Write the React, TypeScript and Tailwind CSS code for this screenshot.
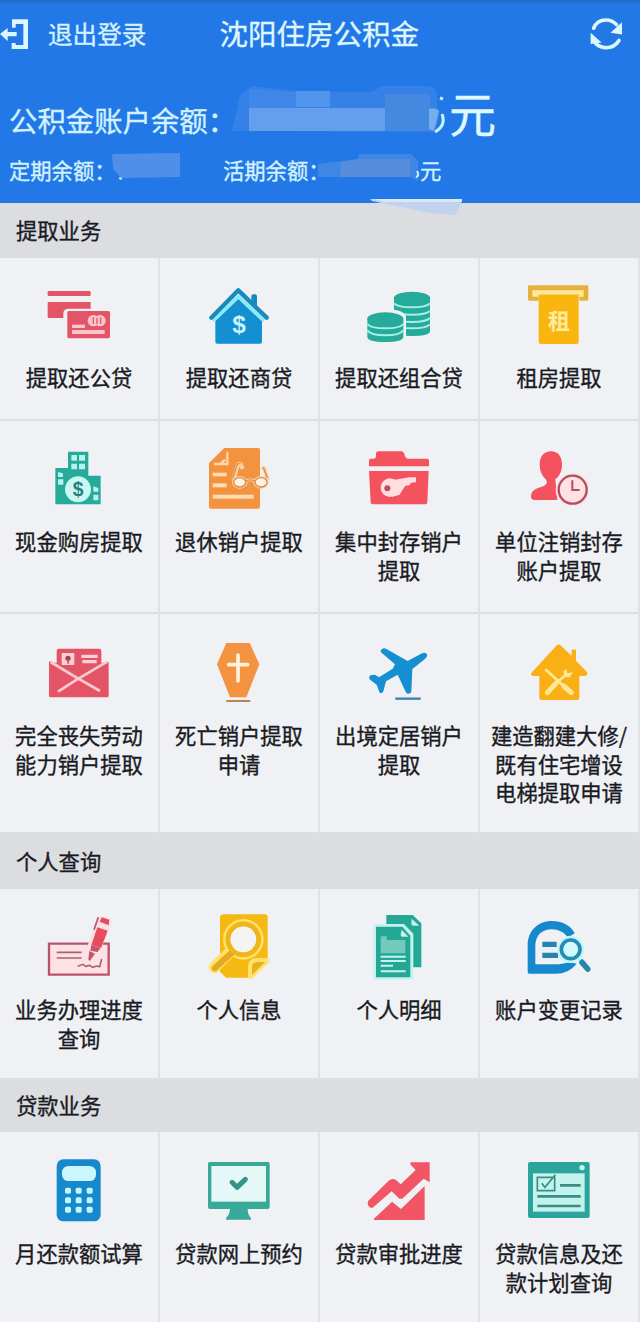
import type { ReactNode } from 'react'

interface Item {
  lines: string[]
  icon: ReactNode
}

interface Row {
  id: string
  className: string
  iconTop: number
  items: Item[]
}

interface Section {
  title: string
  className: string
  rows: Row[]
}

const RED = '#e35566'
const CORAL = '#f4525f'
const BLUE = '#148fd2'
const GREEN = '#26aa9a'
const AMBER = '#fbb50f'
const ORANGE = '#f3923f'

const CardsIcon = (
  <g fill={RED}>
    <rect x="143" y="93" width="129" height="15" rx="4" />
    <path d="M146 126h126v20h-66q-16 0-16 14v14h-43q-4 0-4-4v-40q0-4 3-4z" />
    <rect x="202" y="153" width="128" height="82" rx="5" />
    <g fill="#fcc6cd">
      <rect x="216" y="194" width="39" height="10" />
      <rect x="216" y="210" width="98" height="12" />
      <circle cx="280" cy="182" r="17" />
      <circle cx="300" cy="182" r="17" />
    </g>
    <path d="M280 172v20M291 174v18M302 172v20" stroke={RED} strokeWidth="4" />
  </g>
)

const HouseDollarIcon = (
  <g>
    <path d="M638 181l77-76 77 76-6 4v60q0 6-6 6H652q-6 0-6-6v-62z" fill={BLUE} />
    <path d="M640 182l75-72 77 73" fill="none" stroke="#8beaf8" strokeWidth="11" strokeLinejoin="round" />
    <path d="M754 107l4-4h10l3 4v38l-17-18z" fill="#168abe" />
    <path d="M634 173l81-82 85 82" fill="none" stroke="#188abf" strokeWidth="13" strokeLinecap="round" strokeLinejoin="round" />
    <text x="717" y="219" textAnchor="middle" fontSize="73" fontWeight="700" fontFamily="Liberation Sans, sans-serif" fill="#c9f6fa">$</text>
  </g>
)

const CoinsIcon = (
  <g>
    <path d="M222 112v102q0 14 54 14t54-14V112z" fill={GREEN} />
    <ellipse cx="276" cy="113" rx="54" ry="18" fill={GREEN} />
    <path d="M222 130q12 12 54 12t54-12M222 153q12 11 54 11t54-11M222 174q12 12 54 12t54-12M222 193q12 12 54 12t54-12" fill="none" stroke="#a7efe5" strokeWidth="6" />
    <path d="M136 170q0-22 60-22t62 24v82H136z" fill="#eff1f4" />
    <path d="M142 174v56q0 16 54 16t54-16v-56z" fill={GREEN} />
    <ellipse cx="196" cy="176" rx="54" ry="19" fill={GREEN} />
    <path d="M142 192q10 13 54 13t54-13M142 211q10 15 54 15t54-15" fill="none" stroke="#a7efe5" strokeWidth="6" />
  </g>
)

const RentIcon = (
  <g>
    <path d="M628 76h173q4 0 4 4v38q0 4-4 4h-23V106H656v16h-28q-4 0-4-4V80q0-4 4-4z" fill="#e3b23c" />
    <path d="M637 91h154v19h-13v-6H656v6h-19z" fill="#ffe796" />
    <path d="M656 104h120v142q0 6-6 6H662q-6 0-6-6z" fill={AMBER} />
    <text x="717" y="208" textAnchor="middle" fontSize="66" fontWeight="700" fontFamily="Noto Sans CJK SC, sans-serif" fill="#ffeba0">租</text>
  </g>
)

const BuildingIcon = (
  <g>
    <path d="M204 95h61v72h37v86H166V144h38z" fill={GREEN} />
    <g fill="#b9f2ec">
      <path d="M214 105h17v17h-17zM237 105h18v17h-18zM214 131h17v17h-17zM237 131h18v17h-18z" />
      <path d="M174 156l15 4v11h-15zM174 178h16v16h-16zM280 199l15 5v11h-15zM280 224h15v17h-15z" />
    </g>
    <circle cx="234" cy="208" r="43" fill={GREEN} />
    <circle cx="234" cy="208" r="39" fill="#c9f7f1" />
    <text x="234" y="228" textAnchor="middle" fontSize="58" fontWeight="700" fontFamily="Liberation Sans, sans-serif" fill="#237f7a">$</text>
  </g>
)

const RetireIcon = (
  <g>
    <path d="M673 84h102q5 0 5 6v170q0 6-6 6H633q-6 0-6-6V129z" fill={ORANGE} />
    <path d="M682 97v35h-40M675 119l-16 15" fill="none" stroke="#ffd6a5" strokeWidth="7" />
    <g fill="#ffdcb2">
      <rect x="638" y="158" width="42" height="11" />
      <rect x="638" y="190" width="42" height="12" />
      <rect x="638" y="224" width="123" height="12" />
    </g>
    <path d="M700 180l12-40q4-12 11-7l5 14M804 180l-11-34-9-4" fill="none" stroke="#fbd1a3" strokeWidth="12" />
    <ellipse cx="719" cy="187" rx="23" ry="19" fill="#fbd1a3" />
    <ellipse cx="783" cy="187" rx="23" ry="19" fill="#fbd1a3" />
    <path d="M738 184q12-9 26 0" fill="none" stroke="#fbd1a3" strokeWidth="9" />
    <ellipse cx="719" cy="187" rx="18" ry="14" fill="#fff2df" stroke="#d98c4e" strokeWidth="4" />
    <ellipse cx="783" cy="187" rx="18" ry="14" fill="#fff2df" stroke="#d98c4e" strokeWidth="4" />
    <path d="M737 184q13-9 28 0M698 176l12-38q4-10 12-7M802 174l-12-32" fill="none" stroke="#d98c4e" strokeWidth="4" />
  </g>
)

const FolderKeyIcon = (
  <g>
    <path d="M175 94h69q6 0 8 6l3 8q2 8 9 8h58q5 0 5 5v18H147v-18q0-5 5-5h10q6 0 6-7v-9q0-6 7-6z" fill={CORAL} />
    <path d="M147 153h179l-4 94q0 6-6 6H158q-6 0-6-6z" fill={CORAL} />
    <circle cx="210" cy="203" r="28" fill="#ffdde0" />
    <path d="M207 176l18 3 43-7h20v15l-15 1-5 8-12 1-18 28-22 5z" fill="#ffdde0" />
    <circle cx="202" cy="205" r="9" fill="#bd4e5c" />
  </g>
)

const UserClockIcon = (
  <g>
    <path d="M693 94c21 0 33 15 33 40 0 20-8 34-20 44l6 62h-68q-12 0-11-13c1-15 15-22 31-26 14-4 21-12 13-23-12-13-18-26-18-44 0-25 13-40 34-40z" fill={CORAL} />
    <circle cx="758" cy="209" r="51" fill="#f8e6e9" />
    <circle cx="758" cy="209" r="42" fill="#ffe0e3" stroke="#b34e62" strokeWidth="7" />
    <path d="M757 181v29h22" fill="none" stroke="#b34e62" strokeWidth="6" />
  </g>
)

const EnvelopeIcon = (
  <g>
    <path d="M147 154l23 5v-36q0-7 7-7h120q7 0 7 7v36l22-4v102q0 5-5 5H152q-5 0-5-5z" fill={RED} />
    <path d="M152 156l83 50 88-52M300 243l-65-37-61 39" fill="none" stroke="#fcc9cf" strokeWidth="8" />
    <rect x="185" y="129" width="38" height="36" rx="2" fill="#fdd0d4" />
    <circle cx="204" cy="145" r="8" fill="#9d4457" />
    <path d="M202 148h5v13h-5z" fill="#c95364" />
    <path d="M244 139h49M247 155h43" stroke="#fdd0d4" strokeWidth="10" />
  </g>
)

const CoffinIcon = (
  <g>
    <path d="M679 99h70l29 64-39 99h-49l-39-99z" fill={ORANGE} />
    <path d="M714 135v78M686 164h57" stroke="#fff2df" strokeWidth="11" strokeLinecap="round" />
    <path d="M679 273h72" stroke="#b78456" strokeWidth="6" />
  </g>
)

const PlaneIcon = (
  <g>
    <path d="M184 119q6-6 14-3l65 37 43-23q12-5 16 5-1 8-8 13l-37 29-3 68q-1 6-10 6-5 0-7-6l-24-51-35 20-8 30q-3 7-11 4l-9-24-20-15q-5-7 1-13l14-2 12 8 41-26 7-13-42-36q-3-4 1-8z" fill={BLUE} />
    <path d="M226 266h76" stroke="#3982ad" strokeWidth="7" />
  </g>
)

const HouseToolsIcon = (
  <g>
    <path d="M634 189l75-82q7-7 14 0l32 31v-19h13v33l33 34q4 9-6 12h-17v66q0 6-6 6H665q-7 0-7-6v-66h-18q-10-2-6-9z" fill="#fab014" />
    <path d="M676 178l78 71" stroke="#ffe896" strokeWidth="8" />
    <path d="M682 248l27-29M731 228l23 20" stroke="#ffe896" strokeWidth="15" strokeLinecap="round" />
    <path d="M706 222l34-30" stroke="#ffe896" strokeWidth="8" />
    <path d="M733 200l-3-16 9-8 3 14 17-3-10 15z" fill="#ffe896" />
  </g>
)

const SignIcon = (
  <g>
    <path d="M147 341h179v93H147z" fill="#fde2e5" stroke="#bd526c" strokeWidth="7" />
    <path d="M170 367h75M170 384h75M233 409l16-6 8 6 12-3 9 6 12-4 9 2 6-23" fill="none" stroke="#aa6272" strokeWidth="5" />
    <path d="M259 392l-1-30 34-105 42 8v17l-39 94z" fill="#fbe0e4" />
    <path d="M292 292l31 10-20 52-29-9zM305 262l23 7-2 17-27-11z" fill="#e84b5e" />
    <path d="M274 345l27 9-8 12-22-4zM268 363l17 8-15 21q-5 0-5-5zM289 274l8-11" fill="#c4556a" />
    <path d="M282 299l13-37" stroke="#bd526c" strokeWidth="5" />
  </g>
)

const DocSearchIcon = (
  <g>
    <path d="M673 253h122q8 0 8 8v129l-50 53h-75l-18-18V263q0-10 13-10z" fill="#f5b911" />
    <path d="M744 446v-35q0-27 28-27h36v12l-52 50z" fill="#ffe36e" />
    <path d="M756 435v-24q0-15 18-15h22z" fill="#e9b022" />
    <circle cx="730" cy="328" r="61" fill="#ffe16b" />
    <path d="M643 412l47-46" stroke="#ffe16b" strokeWidth="34" strokeLinecap="round" />
    <path d="M645 414l48-44" stroke="#e3aa24" strokeWidth="19" strokeLinecap="round" />
    <circle cx="730" cy="328" r="46" fill="#f7f5ef" stroke="#f0b51a" strokeWidth="15" />
    <circle cx="730" cy="328" r="38" fill="#f4f4f2" />
  </g>
)

const DocsIcon = (
  <g>
    <path d="M199 255h79l26 25v132H199z" fill="#25a796" />
    <path d="M275 266l23 21h-18q-6 0-6-6z" fill="#c3f5ec" />
    <path d="M160 282h92l28 29v138h-120z" fill="#c5f4ef" />
    <path d="M168 290h79l24 27v125H168z" fill="#25a796" />
    <path d="M245 299l20 21h-18q-5 0-5-5z" fill="#c3f5ec" />
    <path d="M182 319h18v11h56v40h-74z" fill="#74c9bd" />
    <path d="M182 380h75M182 393h75M182 407h37M182 424h75" stroke="#c5f4ef" strokeWidth="6" />
  </g>
)

const RecordIcon = (
  <g>
    <path d="M623 425v-79c0-44 31-73 72-73 31 0 58 13 69 37l-20 13c-12-17-31-26-51-25-31 1-46 22-47 48v57h72l32-6 20 4c-17 20-36 30-64 30h-78q-5 0-5-6z" fill="#1689ce" />
    <path d="M667 343h43M667 376h47" stroke="#2585b0" strokeWidth="16" />
    <circle cx="752" cy="358" r="41" fill="#c5f5fb" />
    <circle cx="752" cy="358" r="28" fill="#d0fafc" stroke="#278bb7" strokeWidth="11" />
    <path d="M776 386l9 9" stroke="#c5f5fb" strokeWidth="16" />
    <path d="M786 397l17 20" stroke="#2585ad" strokeWidth="17" strokeLinecap="round" />
  </g>
)

const CalculatorIcon = (
  <g>
    <rect x="170" y="262" width="132" height="186" rx="20" fill="#1689ce" />
    <rect x="186" y="282" width="102" height="45" rx="19" fill="#c9f7fc" />
    <g fill="#c4f6fc">
      <rect x="195" y="347" width="18" height="18" rx="5" />
      <rect x="227" y="347" width="18" height="18" rx="5" />
      <rect x="260" y="347" width="18" height="18" rx="5" />
      <rect x="195" y="376" width="18" height="18" rx="5" />
      <rect x="227" y="376" width="18" height="18" rx="5" />
      <rect x="260" y="376" width="18" height="18" rx="5" />
      <rect x="195" y="404" width="18" height="18" rx="5" />
      <rect x="227" y="404" width="18" height="18" rx="5" />
      <rect x="260" y="404" width="18" height="18" rx="5" />
    </g>
  </g>
)

const MonitorIcon = (
  <g>
    <path d="M629 270h175q5 0 5 5v130q0 6-6 6h-60q0 18 10 27v5h-75v-5q11-9 12-27h-60q-6 0-6-6V275q0-5 5-5z" fill="#38a899" />
    <rect x="634" y="282" width="164" height="107" fill="#e3f8f7" />
    <path d="M696 331l15 15 25-24" fill="none" stroke="#359487" strokeWidth="15" strokeLinejoin="round" strokeLinecap="round" />
  </g>
)

const TrendIcon = (
  <g fill="#f25566">
    <path d="M145 386l61-60q12-10 23-1l13 12 45-43-17-18 3-5h56v60l-18-11-61 57q-8 7-15 0l-20-19-57 49q-14 2-15-15z" />
    <path d="M161 441l55-52 27 22 71-69v102H163z" />
  </g>
)

const FormIcon = (
  <g>
    <rect x="624" y="270" width="185" height="168" rx="6" fill="#2ba59b" />
    <rect x="639" y="304" width="155" height="115" fill="#c2f4ed" />
    <circle cx="786" cy="287" r="8" fill="#c2f4ed" />
    <path d="M720 340h62M652 373h130M652 402h130" stroke="#3c8c85" strokeWidth="8" />
    <path d="M652 316h52v40h-52zM665 334l10 12 31-38" fill="none" stroke="#3c8c85" strokeWidth="5" />
  </g>
)

// Icons of columns 1 and 3 are drawn around x = 237, those of 2 and 4 around x = 717.
const sections: Section[] = [
  {
    title: '提取业务',
    className: 'h-[55px] pb-0.5',
    rows: [
      {
        id: 'withdraw-loan',
        className: 'h-[163px] pt-[22px]',
        iconTop: 60,
        items: [
          { lines: ['提取还公贷'], icon: CardsIcon },
          { lines: ['提取还商贷'], icon: HouseDollarIcon },
          { lines: ['提取还组合贷'], icon: CoinsIcon },
          { lines: ['租房提取'], icon: RentIcon },
        ],
      },
      {
        id: 'withdraw-close',
        className: 'h-[193px] pt-[23px]',
        iconTop: 72,
        items: [
          { lines: ['现金购房提取'], icon: BuildingIcon },
          { lines: ['退休销户提取'], icon: RetireIcon },
          { lines: ['集中封存销户', '提取'], icon: FolderKeyIcon },
          { lines: ['单位注销封存', '账户提取'], icon: UserClockIcon },
        ],
      },
      {
        id: 'withdraw-other',
        className: 'h-[220px] pt-6',
        iconTop: 84,
        items: [
          { lines: ['完全丧失劳动', '能力销户提取'], icon: EnvelopeIcon },
          { lines: ['死亡销户提取', '申请'], icon: CoffinIcon },
          { lines: ['出境定居销户', '提取'], icon: PlaneIcon },
          { lines: ['建造翻建大修/', '既有住宅增设', '电梯提取申请'], icon: HouseToolsIcon },
        ],
      },
    ],
  },
  {
    title: '个人查询',
    className: 'h-[55px] pb-0.5',
    rows: [
      {
        id: 'personal',
        className: 'h-[191px] pt-[23px]',
        iconTop: 246,
        items: [
          { lines: ['业务办理进度', '查询'], icon: SignIcon },
          { lines: ['个人信息'], icon: DocSearchIcon },
          { lines: ['个人明细'], icon: DocsIcon },
          { lines: ['账户变更记录'], icon: RecordIcon },
        ],
      },
    ],
  },
  {
    title: '贷款业务',
    className: 'h-[52px] pb-0.5',
    rows: [
      {
        id: 'loan',
        className: 'h-[194px] pt-6',
        iconTop: 252,
        items: [
          { lines: ['月还款额试算'], icon: CalculatorIcon },
          { lines: ['贷款网上预约'], icon: MonitorIcon },
          { lines: ['贷款审批进度'], icon: TrendIcon },
          { lines: ['贷款信息及还', '款计划查询'], icon: FormIcon },
        ],
      },
    ],
  },
]

function Header() {
  return (
    <header className="relative h-[203px] bg-linear-to-b from-[#1d68bd] via-[#2178e6] via-[4px] to-[#2178e6] text-[#d3f1ff]">
      <div className="flex h-[66px] items-center">
        <svg viewBox="0 0 90 96" className="h-8 w-[30px]" fill="#dcf8ff">
          <path d="M36 7h48v89H35V78h12v6h23V21H47v11H36z" />
          <path d="M0 51l23-18v12h27v13H23v14z" />
        </svg>
        <span className="ml-[18px] text-[24.6px] leading-8">退出登录</span>
        <h1 className="ml-[73px] text-[28.5px] leading-8 font-normal text-[#dff6ff]">沈阳住房公积金</h1>
        <svg viewBox="806 50 106 100" className="ml-auto mr-4 h-[33px] w-[35px]">
          <path d="M820 84q10-25 38-25 18 0 31 14M897 121q-14 22-39 22-19 0-32-13" fill="none" stroke="#dcf8ff" strokeWidth="11" strokeLinecap="round" />
          <path d="M906 66v37l-35-5zM811 98v34l33-5z" fill="#dcf8ff" />
        </svg>
      </div>
      <div className="flex h-[85px] pl-[9px]">
        <span className="w-[440px] pt-[38px] text-[28.4px] leading-8">公积金账户余额：</span>
        <span className="pt-[21px] text-[47px] leading-[50px] text-[#dff8ff]">元</span>
      </div>
      <div className="flex pl-[9px] text-[21.3px] leading-[38px]">
        <span className="w-[214px]">定期余额：</span>
        <span className="w-[197px]">活期余额：</span>
        <span>元</span>
      </div>
      {/* Mosaic strokes over the amounts */}
      <svg viewBox="0 0 640 220" className="absolute left-0 top-0 h-[220px] w-[640px]">
        <path d="M232 131l8-36 12-9 44 5 76 1 10-6h45q10 0 10 10v36z" fill="#3581e7" />
        <path d="M249 89l47 3v16h-47z" fill="#3f88e8" />
        <path d="M296 91h34v16h-34z" fill="#5295ed" />
        <path d="M249 108h136v23H249z" fill="#649eed" />
        <path d="M385 94h45v37h-45z" fill="#4389df" />
        <path d="M429 109q7-2 10 2-3 16-6 20l-4-2z" fill="#74aeee" />
        <path d="M440 98l3 1M442 114c3 8 0 14-7 18" fill="none" stroke="#c9f1ff" strokeWidth="3" />
        <path d="M112 154l68-1v24l-59 1-8-9z" fill="#508fe9" />
        <path d="M119 178l3 1" stroke="#b9e4ff" strokeWidth="2" />
        <path d="M318 164l40-5 1-5h52l7 7v20l-8-4h-92z" fill="#3f87e5" />
        <path d="M341 162l17-3h52v18h-70z" fill="#568ddd" />
        <path d="M417 171q3 5-1 6" fill="none" stroke="#c9f1ff" strokeWidth="2" />
        <path d="M370 199h92l-1 4-5 12-27-2-57-12z" fill="#c2d3f2" />
        <path d="M375 199h87v3h-77z" fill="#d9e9fb" />
      </svg>
    </header>
  )
}

function Cell({ item, column, iconTop }: { item: Item; column: number; iconTop: number }) {
  return (
    <div className="flex flex-col items-center">
      <svg viewBox={`${column % 2 ? 597 : 117} ${iconTop} 240 210`} className="h-[70px] w-20 shrink-0">
        {item.icon}
      </svg>
      <div className="mt-[13px] text-center text-[21.3px] leading-[28.6px] whitespace-nowrap">
        {item.lines.map((line) => (
          <div key={line}>{line}</div>
        ))}
      </div>
    </div>
  )
}

export default function App() {
  return (
    <main className="h-[1322px] w-[640px] overflow-hidden bg-[#eff1f4] font-['Noto_Sans_CJK_SC',sans-serif] text-[#191a23] [-webkit-text-stroke:0.35px_currentColor]">
      <Header />
      {sections.map((section) => (
        <section key={section.title}>
          <h2 className={`flex items-center bg-[#dcdde0] pl-4 text-[21.3px] font-normal ${section.className}`}>
            {section.title}
          </h2>
          {section.rows.map((row) => (
            <div key={row.id} className="grid grid-cols-4 border-b-2 border-[#dcdee2]">
              {row.items.map((item, i) => (
                <div key={item.lines[0]} className={`-mb-0.5 border-r-2 border-[#e0e2e6] ${row.className}`}>
                  <Cell item={item} column={i} iconTop={row.iconTop} />
                </div>
              ))}
            </div>
          ))}
        </section>
      ))}
    </main>
  )
}
